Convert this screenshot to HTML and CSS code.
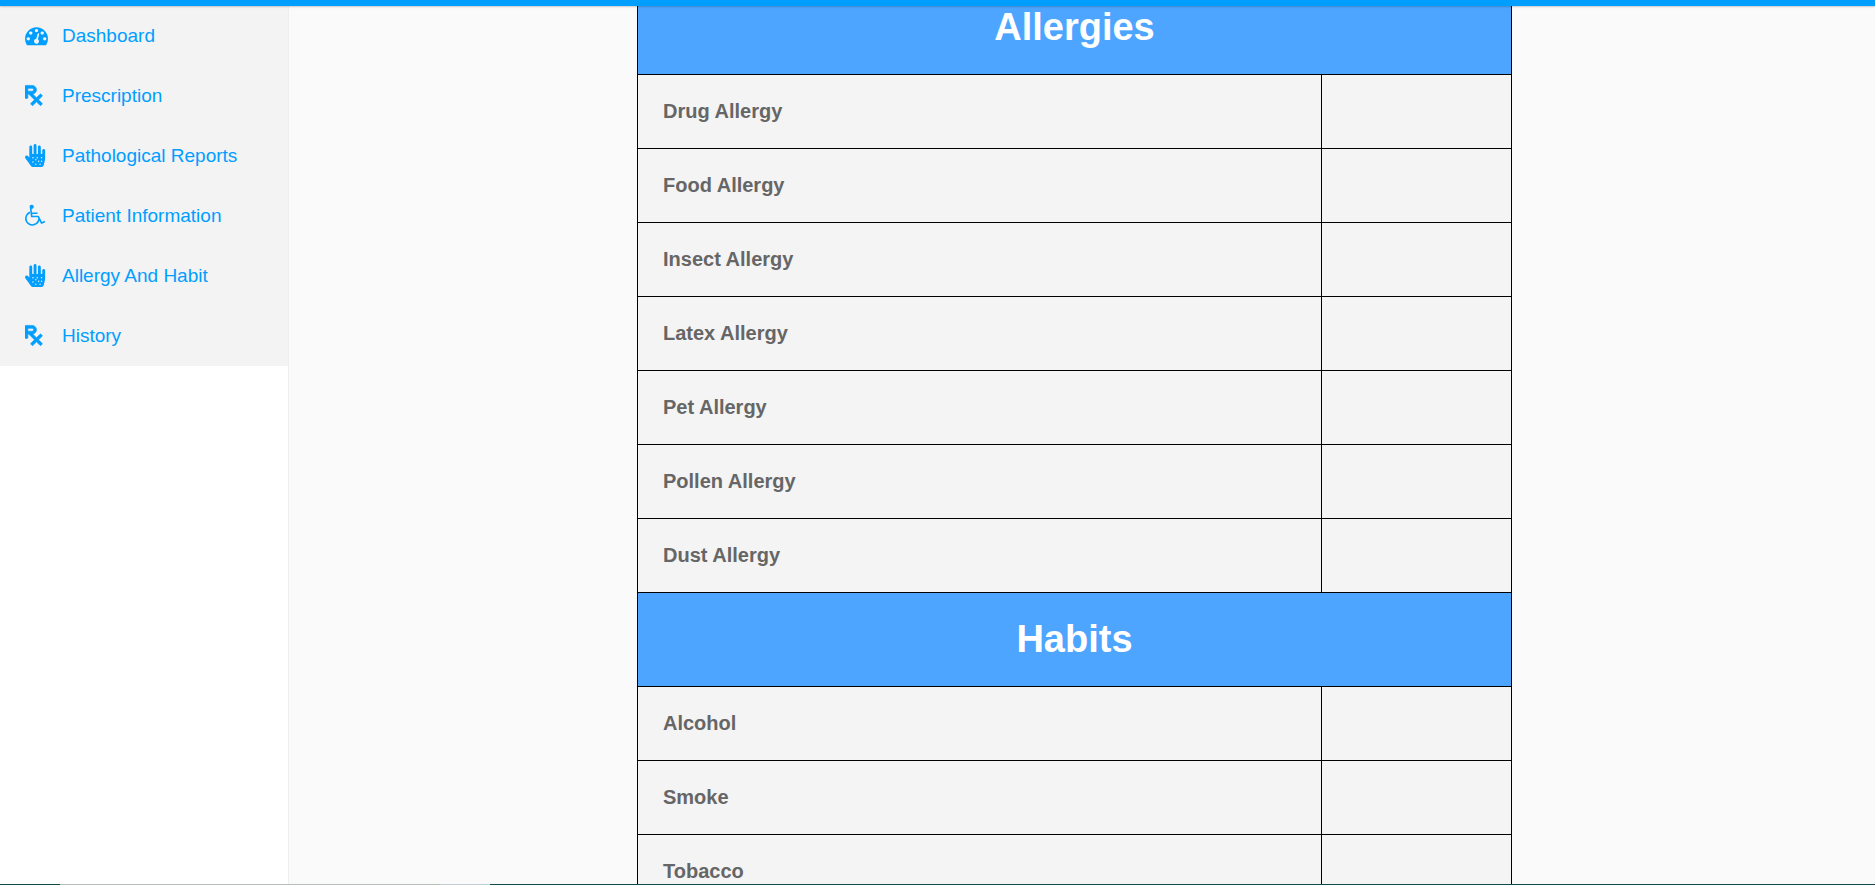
FILE: index.html
```html
<!DOCTYPE html>
<html lang="en">
<head>
<meta charset="utf-8">
<title>Allergy And Habit</title>
<link rel="stylesheet" href="styles.css">
</head>
<body>
<svg class="sprite" aria-hidden="true">
  <symbol id="gauge" viewBox="0 0 1792 1792"><path d="M384 1152q0-53-37.500-90.500t-90.500-37.500-90.500 37.500-37.500 90.500 37.500 90.500 90.500 37.500 90.500-37.500 37.500-90.500zm192-448q0-53-37.500-90.500t-90.500-37.500-90.500 37.500-37.500 90.500 37.500 90.500 90.500 37.500 90.500-37.500 37.500-90.500zm428 481l101-382q6-26-7.500-48.500t-38.500-29.500-48 6.500-30 39.500l-101 382q-60 5-107 43.500t-63 98.500q-20 77 20 146t117 89 146-20 89-117q16-60-6-117t-72-91zm660-33q0-53-37.500-90.500t-90.500-37.500-90.500 37.500-37.500 90.500 37.500 90.500 90.500 37.500 90.500-37.500 37.500-90.500zm-640-640q0-53-37.500-90.500t-90.500-37.500-90.500 37.500-37.500 90.500 37.500 90.500 90.500 37.500 90.500-37.500 37.500-90.500zm448 192q0-53-37.500-90.500t-90.500-37.500-90.500 37.500-37.500 90.500 37.500 90.500 90.500 37.500 90.500-37.500 37.500-90.500zm320 448q0 261-141 483-19 29-54 29h-1402q-35 0-54-29-141-221-141-483 0-182 71-348t191-286 286-191 348-71 348 71 286 191 191 286 71 348z"/></symbol>
  <symbol id="rx" viewBox="0 0 512 512"><path class="bold" d="M301.260 352l78.060-78.060c6.250-6.250 6.250-16.380 0-22.630l-22.630-22.630c-6.250-6.250-16.380-6.250-22.630 0L256 306.740l-83.960-83.960C219.310 216.800 256 176.890 256 128c0-53.020-42.980-96-96-96H16C7.160 32 0 39.160 0 48v256c0 8.840 7.160 16 16 16h32c8.840 0 16-7.160 16-16v-80h18.750l128 128-78.060 78.060c-6.250 6.250-6.250 16.380 0 22.630l22.630 22.630c6.250 6.250 16.380 6.250 22.630 0L256 397.250l78.060 78.060c6.250 6.250 16.380 6.250 22.630 0l22.630-22.630c6.250-6.250 6.250-16.380 0-22.630L301.260 352zM64 96h96c17.640 0 32 14.360 32 32s-14.360 32-32 32H64V96z"/></symbol>
  <symbol id="hand" viewBox="0 0 512 512"><path d="M416 112c-17.600 0-32 14.400-32 32v72c0 4.400-3.600 8-8 8h-16c-4.400 0-8-3.600-8-8V64c0-17.600-14.400-32-32-32s-32 14.400-32 32v152c0 4.400-3.600 8-8 8h-16c-4.400 0-8-3.600-8-8V32c0-17.600-14.400-32-32-32s-32 14.400-32 32v184c0 4.400-3.600 8-8 8h-16c-4.400 0-8-3.600-8-8V64c0-17.600-14.400-32-32-32S96 46.400 96 64v241l-23.600-32.500c-13-17.900-38-21.800-55.900-8.800S-5.100 302 7.800 319.800l125.600 172.700c9 12.400 23.500 19.500 38.800 19.500h197.600c22.300 0 41.600-15.300 46.700-37l26.500-112.700c3.200-13.700 4.900-28.300 5-42.300V144c0-17.600-14.400-32-32-32z"/><g class="spot"><circle cx="176" cy="400" r="16"/><circle cx="176" cy="304" r="16"/><circle cx="240" cy="352" r="16"/><circle cx="240" cy="448" r="16"/><circle cx="272" cy="304" r="16"/><circle cx="304" cy="384" r="16"/><circle cx="336" cy="448" r="16"/><circle cx="368" cy="304" r="16"/><circle cx="368" cy="384" r="16"/></g></symbol>
  <symbol id="wheelchair" viewBox="64 0 1792 1792"><path d="M1088 1093l102 204q-58 179-210 290t-339 111q-156 0-288.500-77.500t-210-210-77.500-288.500q0-181 104.500-330t274.500-211l17 131q-122 54-195 165.500t-73 244.500q0 185 131.500 316.500t316.500 131.500q126 0 232.500-65t165-175.500 49.500-236.500zm495 212l58 114-256 128q-13 7-29 7-40 0-57-35l-239-477h-472q-24 0-42.500-16.500t-21.500-40.500l-96-779q-2-17 6-42 14-51 57-82.500t97-31.500q66 0 113 47t47 113q0 69-52 117.500t-120 41.500l37 289h423v128h-407l16 128h455q40 0 57 35l228 455z"/></symbol>
</svg>
<header class="topbar"></header>
<div class="layout">
  <aside class="sidebar">
    <nav class="menu">
      <a class="menu-item" href="#"><svg class="icon"><use href="#gauge"/></svg>Dashboard</a>
      <a class="menu-item" href="#"><svg class="icon"><use href="#rx"/></svg>Prescription</a>
      <a class="menu-item" href="#"><svg class="icon"><use href="#hand"/></svg>Pathological Reports</a>
      <a class="menu-item" href="#"><svg class="icon"><use href="#wheelchair"/></svg>Patient Information</a>
      <a class="menu-item" href="#"><svg class="icon"><use href="#hand"/></svg>Allergy And Habit</a>
      <a class="menu-item" href="#"><svg class="icon"><use href="#rx"/></svg>History</a>
    </nav>
  </aside>
  <main class="content">
    <table class="records">
      <colgroup><col><col class="value-col"></colgroup>
      <tbody>
        <tr><th class="section" colspan="2">Allergies</th></tr>
        <tr><th class="label" scope="row">Drug Allergy</th><td></td></tr>
        <tr><th class="label" scope="row">Food Allergy</th><td></td></tr>
        <tr><th class="label" scope="row">Insect Allergy</th><td></td></tr>
        <tr><th class="label" scope="row">Latex Allergy</th><td></td></tr>
        <tr><th class="label" scope="row">Pet Allergy</th><td></td></tr>
        <tr><th class="label" scope="row">Pollen Allergy</th><td></td></tr>
        <tr><th class="label" scope="row">Dust Allergy</th><td></td></tr>
      </tbody>
      <tbody>
        <tr><th class="section" colspan="2">Habits</th></tr>
        <tr><th class="label" scope="row">Alcohol</th><td></td></tr>
        <tr><th class="label" scope="row">Smoke</th><td></td></tr>
        <tr><th class="label" scope="row">Tobacco</th><td></td></tr>
      </tbody>
    </table>
  </main>
</div>
<footer class="edge"><span class="edge-light"></span><span class="edge-pale"></span></footer>
</body>
</html>
```
FILE: styles.css
```css
* {
  box-sizing: border-box;
}

body {
  margin: 0;
  height: 100vh;
  display: flex;
  flex-direction: column;
  overflow: hidden;
  background: #fafafa;
  font-family: "Liberation Sans", Arial, sans-serif;
}

.sprite {
  position: absolute;
  width: 0;
  height: 0;
}

.topbar {
  flex: none;
  height: 6px;
  background: #009eff;
  box-shadow: 0 1px 2px rgba(0, 0, 0, 0.2);
  z-index: 1;
}

.layout {
  flex: 1;
  min-height: 0;
  display: flex;
  overflow: hidden;
}

.sidebar {
  flex: none;
  width: 289px;
  background: #fff;
  border-right: 1px solid #eee;
}

.menu {
  background: #f3f3f3;
}

.menu-item {
  display: flex;
  align-items: center;
  gap: 14px;
  height: 60px;
  padding: 0 25px;
  color: #009eff;
  font-size: 19px;
  text-decoration: none;
}

.icon {
  flex: none;
  width: 23px;
  height: 23px;
  margin-bottom: 2px;
  fill: currentColor;
}

.bold {
  stroke: currentColor;
  stroke-width: 14px;
}

.spot {
  fill: #f3f3f3;
}

.content {
  flex: 1;
  padding-right: 15px;
}

.records {
  width: 100%;
  max-width: 875px;
  /* scrolled so that the top of the first heading is under the bar */
  margin: -26px auto 0;
  border-collapse: collapse;
  table-layout: fixed;
  background: #f4f4f4;
}

.value-col {
  width: 190px;
}

.records th,
.records td {
  height: 74px;
  padding: 0 25px;
  border: 1px solid #000;
}

.records .label {
  color: #666;
  font-size: 20px;
  text-align: left;
}

.records .section {
  height: 94px;
  background: #4da5ff;
  color: #fff;
  font-size: 38px;
}

.edge {
  flex: none;
  display: flex;
  height: 1px;
  padding-left: 60px;
  background: #0d4a4d;
}

.edge-light {
  width: 380px;
  background: #b7bdb7;
}

.edge-pale {
  width: 50px;
  background: #c0d0d4;
}
```
